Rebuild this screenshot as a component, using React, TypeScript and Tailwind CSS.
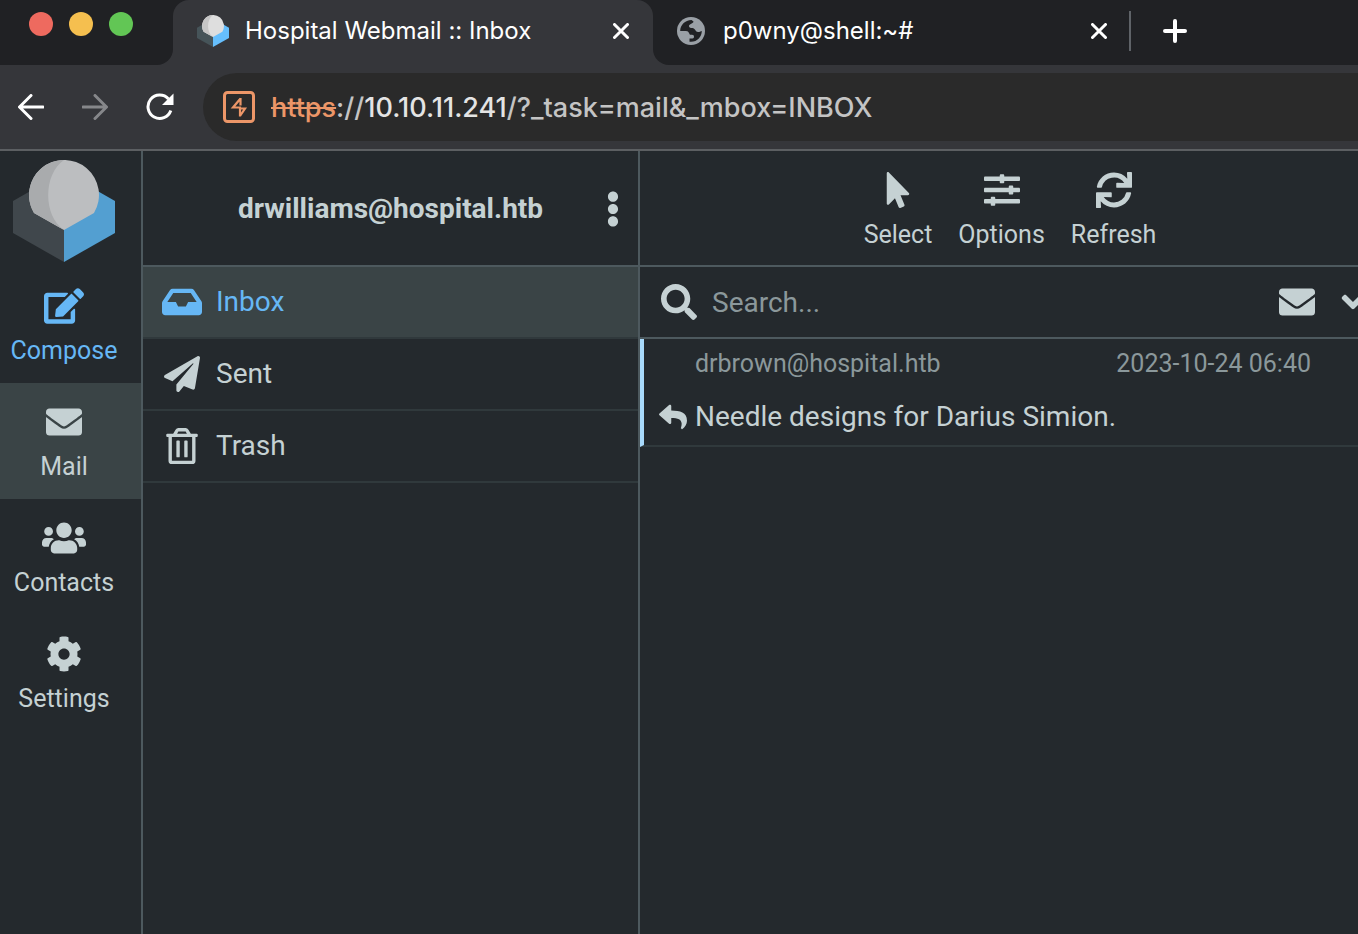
import type { ReactNode } from "react";
import {
  FaAngleDown,
  FaCog,
  FaEdit,
  FaEllipsisV,
  FaEnvelope,
  FaInbox,
  FaMousePointer,
  FaPaperPlane,
  FaRegTrashAlt,
  FaReply,
  FaSearch,
  FaSlidersH,
  FaSync,
  FaUsers,
} from "react-icons/fa";

function Logo({ className, bright = false }: { className: string; bright?: boolean }) {
  return (
    <svg viewBox="0 0 102 102" className={className} aria-hidden="true">
      <path d="M0 41 L21 29 L51 60 V102 L0 73 Z" fill={bright ? "#465459" : "#40474c"} />
      <path d="M102 41 L81 29 L51 60 V102 L102 73 Z" fill={bright ? "#66bffd" : "#539fd1"} />
      <path d="M51 70 L21 53 A35 35 0 1 1 81 53 Z" fill={bright ? "#dedede" : "#bcbec0"} />
      <path
        d="M51 70 L21 53 A35 35 0 0 1 51 0 C30 14 30 56 51 70 Z"
        fill={bright ? "#c6c6c6" : "#a9abad"}
      />
    </svg>
  );
}

function CloseIcon() {
  return (
    <svg viewBox="0 0 16 16" className="size-4" fill="none" stroke="currentColor" strokeWidth="3" strokeLinecap="round">
      <path d="M1.5 1.5 L14.5 14.5 M14.5 1.5 L1.5 14.5" />
    </svg>
  );
}

function Globe() {
  return (
    <svg viewBox="0 0 28 28" className="size-7 shrink-0" aria-hidden="true">
      <circle cx="14" cy="14" r="14" fill="#9aa0a6" />
      <path
        d="M3.200 14 C3.200 8 8 3 14.500 3 L16.500 4.500 C16.500 6.500 12 7 12 9 C12 10.500 13 11 15.500 11 C18 11 18.500 15 21 15 C22.500 15 23.500 14.500 24.800 14 C24.800 20 20 25.500 12.500 24.700 V21.500 H15.500 C16.500 21.500 17 20.500 17 19.500 C17 18 15.500 17.800 13.500 17.800 C12 17.800 12.500 14 9 14 Z"
        fill="#202124"
      />
    </svg>
  );
}

function BrowserTabs() {
  return (
    <div className="flex h-[65px] bg-[#35363a] text-2xl text-white">
      <div className="flex w-[173px] shrink-0 gap-4 rounded-br-2xl bg-[#202124] pt-3 pl-[29px]">
        <button aria-label="Close window" className="size-6 rounded-full bg-[#ee6a5f]" />
        <button aria-label="Minimise window" className="size-6 rounded-full bg-[#f5bf4f]" />
        <button aria-label="Zoom window" className="size-6 rounded-full bg-[#62c655]" />
      </div>
      <div className="w-[480px] shrink-0 bg-[#202124]">
        <div className="flex h-full items-center rounded-t-2xl bg-[#35363a] pr-6 pb-1 pl-6">
          <Logo className="size-8 shrink-0" bright />
          <span className="ml-4 flex-1 whitespace-nowrap">Hospital Webmail :: Inbox</span>
          <button aria-label="Close tab">
            <CloseIcon />
          </button>
        </div>
      </div>
      <div className="flex min-w-0 flex-1 items-center rounded-bl-2xl bg-[#202124] pb-1 pl-6">
        <Globe />
        <span className="ml-[18px] w-[368px] whitespace-nowrap">p0wny@shell:~#</span>
        <button aria-label="Close tab">
          <CloseIcon />
        </button>
        <span className="ml-[22px] h-10 w-0.5 bg-[#5f6368]" />
        <button aria-label="New tab" className="ml-8">
          <svg viewBox="0 0 24 24" className="size-6" fill="none" stroke="currentColor" strokeWidth="4" strokeLinecap="round">
            <path d="M12 2 V22 M2 12 H22" />
          </svg>
        </button>
      </div>
    </div>
  );
}

function BrowserToolbar() {
  return (
    <div className="flex h-[86px] items-center border-b-2 border-[#5c5f62] bg-[#35363a] pl-[18px] text-white">
      <button aria-label="Back">
        <svg viewBox="0 0 26 26" className="size-[26px]" fill="none" stroke="currentColor" strokeWidth="3" strokeLinecap="round" strokeLinejoin="round">
          <path d="M25 13 H2 M13 1.500 L1.500 13 L13 24.500" />
        </svg>
      </button>
      <button aria-label="Forward" className="ml-[38px] text-[#86878a]">
        <svg viewBox="0 0 26 26" className="size-[26px]" fill="none" stroke="currentColor" strokeWidth="3" strokeLinecap="round" strokeLinejoin="round">
          <path d="M1 13 H24 M13 1.500 L24.500 13 L13 24.500" />
        </svg>
      </button>
      <button aria-label="Reload" className="ml-[38px]">
        <svg viewBox="0 0 28 28" className="size-7" aria-hidden="true">
          <path d="M24.800 17.500 A11.700 11.700 0 1 1 22.500 6" fill="none" stroke="currentColor" strokeWidth="3" />
          <path d="M27.500 0.500 V12 H16 Z" fill="currentColor" />
        </svg>
      </button>
      <div className="ml-[29px] flex h-[68px] min-w-0 flex-1 items-center rounded-l-full bg-[#2a2a2a] pl-5">
        <svg viewBox="0 0 32 32" className="size-8 shrink-0" fill="none" stroke="#ec9668" aria-hidden="true">
          <rect x="1.500" y="1.500" width="29" height="29" rx="3" strokeWidth="3" />
          <path d="M17.500 7 V14.500 M17.500 7.500 L10 16.500 H17 V25.500 M17 25 L22 17.500 H16" strokeWidth="2.200" />
        </svg>
        <div className="ml-4 pt-0.5 text-[27px] leading-8 font-medium whitespace-nowrap text-[#c4c4c4]">
          <span className="text-[#ec9668] line-through decoration-2">https</span>
          <span>://</span>
          <span className="text-[#e4e4e4]">10.10.11.241</span>
          <span>/?_task=mail&amp;_mbox=INBOX</span>
        </div>
      </div>
    </div>
  );
}

function TaskLink({ icon, label, className = "" }: { icon: ReactNode; label: string; className?: string }) {
  return (
    <a href="#" className={`flex h-[116px] flex-col items-center pt-5 pr-[13px] ${className}`}>
      <span className="flex h-[38px] items-center">{icon}</span>
      <span className="mt-[10px] text-[25px] leading-8">{label}</span>
    </a>
  );
}

function Folder({ icon, label, className = "" }: { icon: ReactNode; label: string; className?: string }) {
  return (
    <li>
      <a href="#" className={`flex h-[72px] items-center border-b-2 border-[#30393c] pl-[19px] text-[28px] ${className}`}>
        <span className="flex w-10 justify-center">{icon}</span>
        <span className="ml-[14px]">{label}</span>
      </a>
    </li>
  );
}

function ToolButton({ icon, label }: { icon: ReactNode; label: string }) {
  return (
    <button className="flex flex-col items-center text-[25px] leading-8">
      <span className="flex h-9 items-center">{icon}</span>
      <span className="mt-[11px]">{label}</span>
    </button>
  );
}

export default function App() {
  return (
    <div className="flex min-h-screen flex-col overflow-hidden bg-[#24292d] font-['Inter',sans-serif]">
      <div className="[font-feature-settings:'calt'_0]">
        <BrowserTabs />
        <BrowserToolbar />
      </div>
      <div className="flex flex-1 font-['Roboto',sans-serif] text-[#c5d1d3]">
        <nav className="w-[143px] shrink-0 border-r-2 border-[#4d595e]">
          <div className="flex h-[116px] justify-center pt-[9px] pr-[13px]">
            <Logo className="size-[102px]" />
          </div>
          <TaskLink icon={<FaEdit className="h-9 w-10" />} label="Compose" className="text-[#66b7f5]" />
          <TaskLink icon={<FaEnvelope className="size-9" />} label="Mail" className="bg-[#3a4446]" />
          <TaskLink icon={<FaUsers className="h-9 w-11" />} label="Contacts" />
          <TaskLink icon={<FaCog className="size-9" />} label="Settings" />
        </nav>

        <section className="w-[497px] shrink-0 border-r-2 border-[#4d595e]">
          <header className="flex h-[116px] items-center border-b-2 border-[#4d595e] pt-0.5 pr-[18px] pl-[32px]">
            <h1 className="flex-1 text-center text-[28px] font-bold">drwilliams@hospital.htb</h1>
            <button aria-label="Account menu">
              <FaEllipsisV className="h-9 w-[14px]" />
            </button>
          </header>
          <ul>
            <Folder icon={<FaInbox className="h-9 w-10" />} label="Inbox" className="bg-[#3a4446] text-[#66b7f5]" />
            <Folder icon={<FaPaperPlane className="size-9" />} label="Sent" />
            <Folder icon={<FaRegTrashAlt className="size-9" />} label="Trash" />
          </ul>
        </section>

        <main className="-mr-[22px] min-w-0 flex-1">
          <div className="flex h-[116px] justify-center gap-[26px] border-b-2 border-[#4d595e] pt-[21px]">
            <ToolButton icon={<FaMousePointer className="size-9" />} label="Select" />
            <ToolButton icon={<FaSlidersH className="size-9" />} label="Options" />
            <ToolButton icon={<FaSync className="size-9" />} label="Refresh" />
          </div>
          <form className="flex h-[72px] items-center border-b-2 border-[#4d595e] pr-[9px] pl-[21px]">
            <FaSearch className="size-9 shrink-0" />
            <input
              type="text"
              aria-label="Search"
              placeholder="Search..."
              className="ml-[15px] min-w-0 flex-1 bg-transparent pt-0.5 text-[28px] outline-none placeholder:text-[#8b989b]"
            />
            <button type="button" aria-label="Unread messages">
              <FaEnvelope className="size-9" />
            </button>
            <button type="button" aria-label="Search options" className="ml-5">
              <FaAngleDown className="size-9" />
            </button>
          </form>
          <ul>
            <li className="h-[108px] border-b-2 border-l-4 border-b-[#30393c] border-l-[#a8d9fb] pr-[69px]">
              <div className="flex justify-between pt-[9px] pl-[51px] text-[25px] leading-8 text-[#8b989b]">
                <span>drbrown@hospital.htb</span>
                <time>2023-10-24 06:40</time>
              </div>
              <a href="#" className="mt-[21px] flex items-center pl-[15px] text-[28px] leading-8">
                <FaReply className="size-7" />
                <span className="ml-2">Needle designs for Darius Simion.</span>
              </a>
            </li>
          </ul>
        </main>
      </div>
    </div>
  );
}
